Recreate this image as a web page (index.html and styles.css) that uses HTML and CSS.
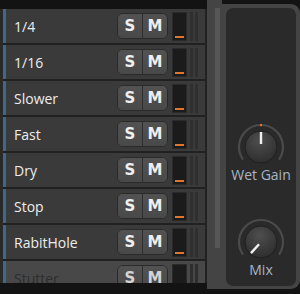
FILE: index.html
```html
<!DOCTYPE html>
<html>
<head>
<meta charset="utf-8">
<link rel="stylesheet" href="styles.css">
</head>
<body>
<div class="app">
  <div class="list-wrap">
    <div class="list">
      <div class="row"><span class="name">1/4</span><div class="sm"><span class="btn">S</span><span class="btn">M</span></div><div class="meter"><span class="level"></span></div><div class="bars"><span></span><span></span></div></div>
      <div class="row"><span class="name">1/16</span><div class="sm"><span class="btn">S</span><span class="btn">M</span></div><div class="meter"><span class="level"></span></div><div class="bars"><span></span><span></span></div></div>
      <div class="row"><span class="name">Slower</span><div class="sm"><span class="btn">S</span><span class="btn">M</span></div><div class="meter"><span class="level"></span></div><div class="bars"><span></span><span></span></div></div>
      <div class="row"><span class="name">Fast</span><div class="sm"><span class="btn">S</span><span class="btn">M</span></div><div class="meter"><span class="level"></span></div><div class="bars"><span></span><span></span></div></div>
      <div class="row"><span class="name">Dry</span><div class="sm"><span class="btn">S</span><span class="btn">M</span></div><div class="meter"><span class="level"></span></div><div class="bars"><span></span><span></span></div></div>
      <div class="row"><span class="name">Stop</span><div class="sm"><span class="btn">S</span><span class="btn">M</span></div><div class="meter"><span class="level"></span></div><div class="bars"><span></span><span></span></div></div>
      <div class="row"><span class="name">RabitHole</span><div class="sm"><span class="btn">S</span><span class="btn">M</span></div><div class="meter"><span class="level"></span></div><div class="bars"><span></span><span></span></div></div>
      <div class="row dim"><span class="name">Stutter</span><div class="sm"><span class="btn">S</span><span class="btn">M</span></div><div class="meter"></div><div class="bars"><span></span><span></span></div></div>
    </div>
  </div>
  <div class="scroll"><div class="thumb"></div></div>
  <div class="side">
    <div class="panel">
      <div class="knob-group">
        <svg class="knob" width="48" height="48" viewBox="0 0 48 48">
          <defs>
            <radialGradient id="kg" cx="0.45" cy="0.3" r="0.75">
              <stop offset="0" stop-color="#4e4e4e"/>
              <stop offset="1" stop-color="#2c2c2c"/>
            </radialGradient>
          </defs>
          <path d="M 5.98 36.62 A 22 22 0 1 1 42.02 36.62" fill="none" stroke="#4a4a4a" stroke-width="2.2"/>
          <rect x="23" y="1" width="2" height="2.2" fill="#e2782c"/>
          <circle cx="24" cy="24" r="16" fill="url(#kg)" stroke="#1f1f1f" stroke-width="1"/>
          <line x1="24" y1="9" x2="24" y2="21" stroke="#f0f0f0" stroke-width="2.4"/>
        </svg>
        <div class="label">Wet Gain</div>
      </div>
      <div class="knob-group">
        <svg class="knob" width="48" height="48" viewBox="0 0 48 48">
          <defs>
            <radialGradient id="kg2" cx="0.45" cy="0.3" r="0.75">
              <stop offset="0" stop-color="#4e4e4e"/>
              <stop offset="1" stop-color="#2c2c2c"/>
            </radialGradient>
          </defs>
          <path d="M 5.98 36.62 A 22 22 0 1 1 42.02 36.62" fill="none" stroke="#4a4a4a" stroke-width="2.2"/>
          <circle cx="24" cy="24" r="16" fill="url(#kg2)" stroke="#1f1f1f" stroke-width="1"/>
          <line x1="24" y1="9" x2="24" y2="21" stroke="#f0f0f0" stroke-width="2.4" transform="rotate(222 24 24)"/>
        </svg>
        <div class="label">Mix</div>
      </div>
    </div>
  </div>
</div>
</body>
</html>
```

FILE: styles.css
```css
html, body {
  margin: 0;
  padding: 0;
  background: #131313;
  width: 300px;
  height: 294px;
  overflow: hidden;
}

.app {
  display: flex;
  width: 300px;
  height: 294px;
}

.list-wrap {
  width: 207px;
  height: 283px;
  padding-top: 9px;
  box-sizing: border-box;
  overflow: hidden;
}

.list {
  background: #212121;
  border-left: 3px solid #2a2a2a;
  padding-right: 2px;
  display: flex;
  flex-direction: column;
  gap: 2px;
}

.row {
  height: 34px;
  flex: none;
  display: flex;
  align-items: center;
  background: #3a3a3a;
  border-left: 3px solid #3d6a8b;
  font-family: "Open Sans", sans-serif;
  font-size: 14px;
  color: #ededed;
}

.row .name {
  width: 103px;
  padding-left: 8px;
  white-space: nowrap;
}

.sm {
  display: flex;
  width: 49px;
  height: 24px;
  border: 1px solid #2a2a2a;
  border-radius: 6px;
  background: #4e4e4e;
  overflow: hidden;
}

.btn {
  flex: 1;
  display: flex;
  align-items: center;
  justify-content: center;
  font-family: "DejaVu Sans", sans-serif;
  font-weight: bold;
  font-size: 15px;
  color: #efefef;
  background: linear-gradient(#525252, #494949);
}

.btn + .btn {
  border-left: 1px solid #2e2e2e;
}

.meter {
  margin-left: 4px;
  width: 13px;
  height: 27px;
  border: 1px solid #2a2a2a;
  background: #1b1b1b;
  position: relative;
}

.level {
  position: absolute;
  left: 2px;
  right: 2px;
  bottom: 2px;
  height: 2px;
  background: #e0772a;
}

.bars {
  display: flex;
  gap: 2px;
  margin-left: 3px;
  height: 29px;
}

.bars span {
  width: 3px;
  background: #2f2f2f;
}

.row.dim {
  background: #484848;
  color: #2e2e2e;
}

.row.dim .btn {
  color: #d4d4d4;
}

.scroll {
  width: 15px;
  height: 289px;
  background: #444444;
  position: relative;
}

.thumb {
  position: absolute;
  left: 8px;
  width: 5px;
  top: 8px;
  height: 240px;
  background: #575757;
}

.side {
  width: 78px;
  height: 285px;
  margin-top: 4px;
  background: #444444;
  border-radius: 0 9px 9px 0;
  padding: 4px 4px 3px 4px;
  box-sizing: border-box;
}

.panel {
  height: 100%;
  background: #2a2a2a;
  border-radius: 7px;
  display: flex;
  flex-direction: column;
  justify-content: flex-end;
  align-items: center;
  gap: 35px;
  padding-bottom: 8px;
  box-sizing: border-box;
}

.knob-group {
  display: flex;
  flex-direction: column;
  align-items: center;
}

.knob {
  display: block;
}

.label {
  font-family: "Open Sans", sans-serif;
  font-size: 14px;
  line-height: 16px;
  margin-top: -4px;
  color: #a8b6c4;
  white-space: nowrap;
}
```
